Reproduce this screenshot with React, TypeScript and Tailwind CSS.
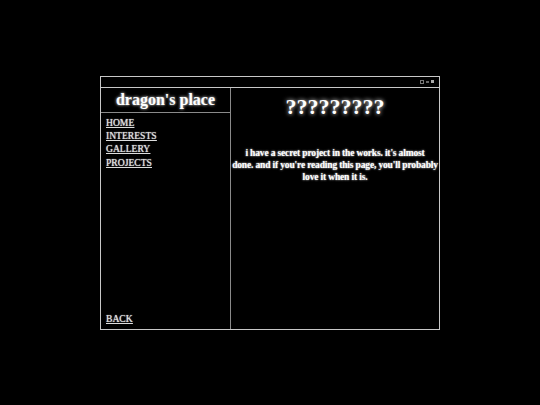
export default function App() {
  const links = ["HOME", "INTERESTS", "GALLERY", "PROJECTS"];
  const lines = [
    "i have a secret project in the works. it's almost",
    "done. and if you're reading this page, you'll probably",
    "love it when it is.",
  ];

  return (
    <div
      className="flex h-[405px] w-[540px] items-center justify-center bg-black text-[#eeeeee]"
      style={{ fontFamily: '"Liberation Serif", serif' }}
    >
      <div className="flex h-[254px] w-[340px] flex-col border border-[#c8c8c8]">
        {/* title bar */}
        <div className="flex h-[11px] shrink-0 items-center justify-end gap-[2px] border-b border-[#c8c8c8] pr-[5px]">
          <span className="h-[4px] w-[4px] border border-[#777]" />
          <span className="h-[2px] w-[3px] bg-[#666]" />
          <span className="h-[3px] w-[3px] bg-[#aaa]" />
        </div>

        <div className="flex min-h-0 flex-1">
          {/* sidebar */}
          <div className="flex w-[130px] shrink-0 flex-col border-r border-[#8a8a8a]">
            <div className="flex h-[25px] items-center justify-center border-b border-[#8a8a8a]">
              <h1 className="text-[16px] font-bold leading-none text-white [text-shadow:0_0_3px_#fff]">
                dragon's place
              </h1>
            </div>
            <nav className="flex flex-1 flex-col px-[5px] pt-[3px] pb-[4px]">
              {links.map((l) => (
                <a
                  key={l}
                  href="#"
                  className="text-[9.6px] leading-[13.4px] text-[#dddddd] underline [text-shadow:0_0_1px_#fff]"
                >
                  {l}
                </a>
              ))}
              <a
                href="#"
                className="mt-auto text-[9.6px] leading-[13px] text-[#dddddd] underline [text-shadow:0_0_1px_#fff]"
              >
                BACK
              </a>
            </nav>
          </div>

          {/* content */}
          <div className="flex min-w-0 flex-1 flex-col items-center pt-[8px] text-center">
            <h2 className="text-[22px] font-bold leading-none text-white [text-shadow:0_0_4px_#fff]">
              ?????????
            </h2>
            <p className="mt-[29px] flex flex-col items-center text-[9.5px] font-bold leading-[12px] tracking-[-0.16px] text-white [text-shadow:0_0_2px_#fff]">
              {lines.map((t) => (
                <span key={t} className="whitespace-nowrap">
                  {t}
                </span>
              ))}
            </p>
          </div>
        </div>
      </div>
    </div>
  );
}
